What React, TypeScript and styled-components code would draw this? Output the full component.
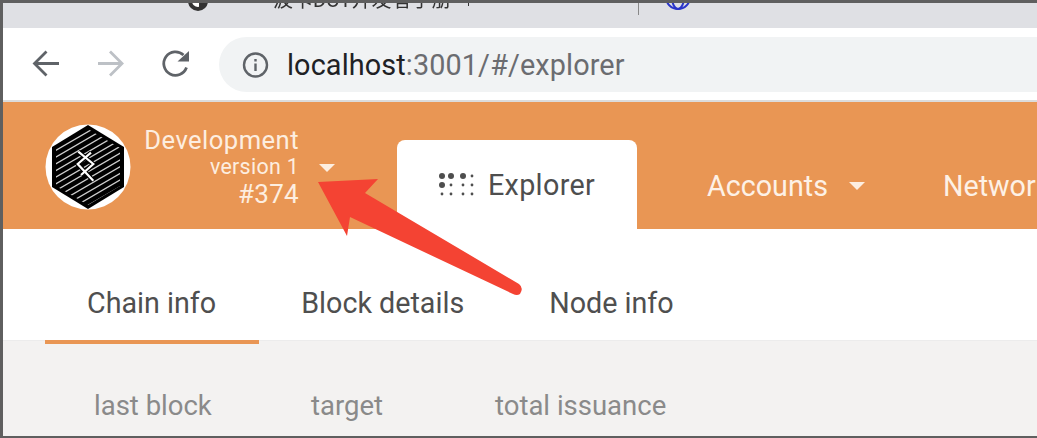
import React from "react"
import styled, { createGlobalStyle } from "styled-components"

const Global = createGlobalStyle`
  html, body {
    margin: 0;
    padding: 0;
    background: #5a5a5a;
    overflow: hidden;
  }
`

const Frame = styled.div`
  width: 1037px;
  height: 438px;
  box-sizing: border-box;
  position: relative;
  overflow: hidden;
  border-top: 3px solid #5f5f5f;
  border-left: 3px solid #5f5f5f;
  border-bottom: 2px solid #5f5f5f;
  display: flex;
  flex-direction: column;
  font-family: Roboto, "Noto Sans CJK SC", sans-serif;
`

const TabStrip = styled.div`
  height: 25px;
  flex: 0 0 auto;
  background: #dfe0e4;
  overflow: hidden;
  display: flex;
  align-items: flex-start;
  padding-left: 135px;
`

const ClippedTitle = styled.div`
  margin-top: -13px;
  margin-left: 65px;
  width: 175px;
  font-size: 20px;
  line-height: 20px;
  color: #333;
  white-space: nowrap;
  filter: blur(0.4px);
`

const FaviconStub = styled.div`
  width: 20px;
  height: 20px;
  margin-top: -12px;
  border-radius: 50%;
  border: 4px solid #333;
  box-sizing: border-box;
  background: linear-gradient(90deg, #fff 55%, #333 55%);
  margin-left: 50px;
`

const Tick = styled.div`
  width: 1px;
  height: 3px;
  background: #333;
  margin-left: 20px;
`

const TabDivider = styled.div`
  width: 1px;
  height: 12px;
  background: #888;
  margin-left: 169px;
`

const BlueGlobe = styled.svg`
  width: 26px;
  height: 26px;
  margin-top: -19px;
  margin-left: 26px;
`

const Toolbar = styled.div`
  height: 72px;
  flex: 0 0 auto;
  background: #fff;
  display: flex;
  align-items: center;
  padding-left: 27px;
  box-sizing: border-box;
`

const NavIcon = styled.svg`
  width: 32px;
  height: 32px;
  margin-right: 33px;
  flex: 0 0 auto;
`

const Omnibox = styled.div`
  flex: 1;
  height: 55px;
  margin-left: -6px;
  margin-right: -40px;
  margin-top: 1px;
  background: #f1f3f4;
  border-radius: 28px 0 0 28px;
  display: flex;
  align-items: center;
  padding-left: 23px;
`

const InfoIcon = styled.svg`
  width: 28px;
  height: 28px;
  margin-right: 17px;
`

const Url = styled.div`
  font-size: 28.8px;
  color: #6b6c70;
  white-space: nowrap;
  letter-spacing: 0.12px;

  strong {
    font-weight: 400;
    color: #202124;
  }
`

const HeaderRule = styled.div`
  height: 2px;
  flex: 0 0 auto;
  background: #dcdcdc;
`

const Header = styled.header`
  height: 127px;
  flex: 0 0 auto;
  background: #e99654;
  display: flex;
  align-items: flex-end;
  padding-left: 42px;
  overflow: hidden;
`

const ChainBlock = styled.div`
  align-self: stretch;
  display: flex;
  align-items: center;
  width: 352px;
  flex: 0 0 auto;
`

const LogoBadge = styled.svg`
  width: 86px;
  height: 86px;
  flex: 0 0 auto;
  margin-top: 2px;
`

const ChainText = styled.div`
  width: 168px;
  flex: 0 0 auto;
  text-align: right;
  color: #fdeee0;
  display: flex;
  flex-direction: column;
  align-items: flex-end;
  margin-top: 2px;
`

const ChainName = styled.div`
  font-size: 25.6px;
  line-height: 30px;
  letter-spacing: 0.45px;
`

const ChainVersion = styled.div`
  font-size: 21.4px;
  line-height: 24px;
  letter-spacing: 0.3px;
`

const ChainBest = styled.div`
  font-size: 26px;
  line-height: 30px;
  letter-spacing: 0.3px;
`

const Caret = styled.span`
  display: block;
  width: 0;
  height: 0;
  border-left: 8px solid transparent;
  border-right: 8px solid transparent;
  border-top: 8px solid #fdeee0;
  flex: 0 0 auto;
`

const ChainCaret = styled(Caret)`
  margin-left: 20px;
  margin-top: 4px;
`

const AccountCaret = styled(Caret)`
  margin-left: 8px;
`

const MenuTab = styled.div<{ $active?: boolean }>`
  height: ${p => (p.$active ? "89px" : "87px")};
  width: ${p => (p.$active ? "240px" : "auto")};
  box-sizing: border-box;
  flex: 0 0 auto;
  display: flex;
  align-items: center;
  justify-content: ${p => (p.$active ? "center" : "flex-start")};
  gap: 13px;
  border-radius: 8px 8px 0 0;
  background: ${p => (p.$active ? "#fff" : "transparent")};
  color: ${p => (p.$active ? "#4e4e4e" : "#fdf1e6")};
  font-size: 28.7px;
  letter-spacing: ${p => (p.$active ? "0.35px" : "0")};
  white-space: nowrap;
  margin-left: ${p => (p.$active ? "0" : "70px")};
`

const MenuTabLast = styled(MenuTab)`
  margin-left: 78px;
`

const DotsIcon = styled.svg`
  width: 36px;
  height: 28px;
  flex: 0 0 auto;
`

const SubNav = styled.nav`
  height: 111px;
  flex: 0 0 auto;
  background: #fff;
  display: flex;
  align-items: flex-end;
  padding-left: 42px;
  box-sizing: border-box;
`

const SubTab = styled.div<{ $active?: boolean }>`
  height: 115px;
  margin-bottom: -4px;
  padding: 36px 43px 0 42px;
  box-sizing: border-box;
  display: flex;
  align-items: center;
  font-size: 28.7px;
  color: #4f4f4f;
  white-space: nowrap;
  border-bottom: 4px solid ${p => (p.$active ? "#e99654" : "transparent")};
  position: relative;
  z-index: 1;
`

const Content = styled.main`
  flex: 1;
  background: #f3f2f1;
  border-top: 1px solid #ececec;
  display: grid;
  grid-template-columns: 217px 184px auto;
  justify-content: start;
  padding: 47px 0 0 91px;
`

const StatLabel = styled.div`
  font-size: 27.5px;
  line-height: 36px;
  color: #8a8a8a;
  white-space: nowrap;
`

const ArrowOverlay = styled.svg`
  position: absolute;
  left: -3px;
  top: -3px;
  width: 1037px;
  height: 438px;
  pointer-events: none;
  z-index: 5;
`

const logoLines = Array.from({ length: 15 }, (_, i) => -2 + i * 6.7)

const Logo = () => (
  <LogoBadge viewBox="0 0 86 86">
    <defs>
      <clipPath id="hex">
        <polygon points="43,5 75,24 75,62 43,81 11,62 11,24" />
      </clipPath>
    </defs>
    <circle cx="43" cy="43" r="42.5" fill="#fff" />
    <polygon points="43,1 79,23 79,63 43,85 7,63 7,23" fill="#000" />
    <g clipPath="url(#hex)" stroke="#cfcfcf" strokeWidth="1.3">
      {logoLines.map(y => (
        <line key={y} x1="0" y1={y + 28} x2="86" y2={y - 22} />
      ))}
    </g>
    <polyline points="33.3,27.7 48.3,40 36,51" fill="none" stroke="#000" strokeWidth="4.5" />
    <polyline points="46,28.7 32.7,40 48.3,56.7" fill="none" stroke="#000" strokeWidth="4.5" />
    <polyline points="33.3,27.7 48.3,40 36,51" fill="none" stroke="#fff" strokeWidth="2.2" />
    <polyline points="46,28.7 32.7,40 48.3,56.7" fill="none" stroke="#fff" strokeWidth="2.2" />
  </LogoBadge>
)

const bigDots = [[6, 6], [15, 6], [27, 6], [6, 15]]
const smallDots = [[36, 6], [15, 15], [27, 15], [36, 15], [6, 24], [15, 24], [27, 24], [36, 24]]

const Dots = () => (
  <DotsIcon viewBox="3 1 36 28" fill="#4e4e4e">
    {bigDots.map(([x, y]) => <circle key={`${x}-${y}`} cx={x} cy={y} r="3" />)}
    {smallDots.map(([x, y]) => <circle key={`${x}-${y}`} cx={x} cy={y} r="1.4" />)}
  </DotsIcon>
)

const App = () => (
  <>
    <Global />
    <Frame>
      <TabStrip>
        <FaviconStub />
        <ClippedTitle>波卡DOT开发者手册</ClippedTitle>
        <Tick />
        <TabDivider />
        <BlueGlobe viewBox="0 0 26 26" fill="none" stroke="#2a35c9" strokeWidth="2">
          <circle cx="13" cy="13" r="12" />
          <ellipse cx="13" cy="13" rx="6" ry="12" />
          <path d="M2 18h22" />
        </BlueGlobe>
      </TabStrip>
      <Toolbar>
        <NavIcon viewBox="0 0 32 32" fill="none" stroke="#5f6368" strokeWidth="2.8">
          <path d="M29 15.5H6M16.5 3.5L4.5 15.5l12 12" />
        </NavIcon>
        <NavIcon viewBox="0 0 32 32" fill="none" stroke="#bdc1c6" strokeWidth="2.8">
          <path d="M3 15.5h23M15 3.5l12 12-12 12" />
        </NavIcon>
        <NavIcon viewBox="0 0 32 32" fill="none">
          <path d="M26.5 19.5A11.7 11.7 0 1 1 23.5 7" stroke="#5f6368" strokeWidth="2.8" />
          <path d="M29 3v10.5H17.5z" fill="#5f6368" />
        </NavIcon>
        <Omnibox>
          <InfoIcon viewBox="0 0 28 28" fill="none">
            <circle cx="13.5" cy="14" r="11.5" stroke="#5f6368" strokeWidth="2.4" />
            <path d="M13.5 12.5V20M13.5 8v2.4" stroke="#5f6368" strokeWidth="2.4" />
          </InfoIcon>
          <Url><strong>localhost</strong>:3001/#/explorer</Url>
        </Omnibox>
      </Toolbar>
      <HeaderRule />
      <Header>
        <ChainBlock>
          <Logo />
          <ChainText>
            <ChainName>Development</ChainName>
            <ChainVersion>version 1</ChainVersion>
            <ChainBest>#374</ChainBest>
          </ChainText>
          <ChainCaret />
        </ChainBlock>
        <MenuTab $active>
          <Dots />
          Explorer
        </MenuTab>
        <MenuTab>
          Accounts
          <AccountCaret />
        </MenuTab>
        <MenuTabLast>Network</MenuTabLast>
      </Header>
      <SubNav>
        <SubTab $active>Chain info</SubTab>
        <SubTab>Block details</SubTab>
        <SubTab>Node info</SubTab>
      </SubNav>
      <Content>
        <StatLabel>last block</StatLabel>
        <StatLabel>target</StatLabel>
        <StatLabel>total issuance</StatLabel>
      </Content>
      <ArrowOverlay viewBox="0 0 1037 438">
        <path
          d="M318 182L378 179L365 193L519 284Q524 288 520 294Q517 296 513 294L350 217L347 236Z"
          fill="#f44333"
        />
      </ArrowOverlay>
    </Frame>
  </>
)

export default App
